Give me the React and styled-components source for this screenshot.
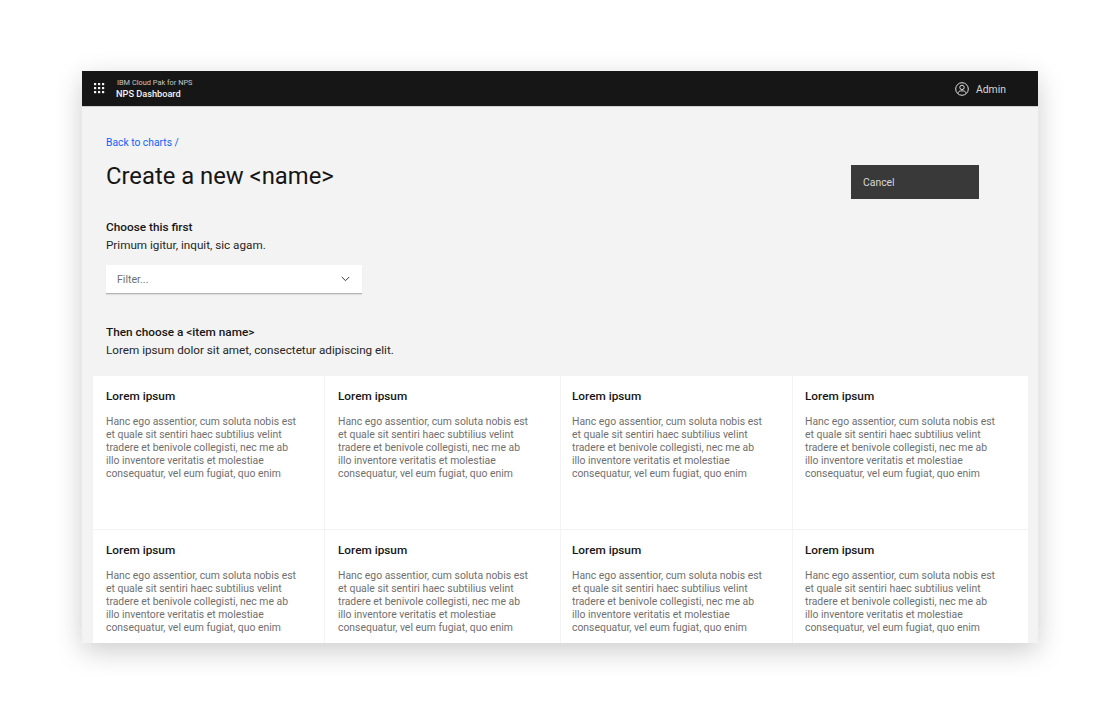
import React from "react";
import styled, { createGlobalStyle } from "styled-components";

const cards = ["a", "b", "c", "d", "e", "f", "g", "h"];
const insets = [13, 13, 11, 12, 13, 13, 11, 12];

const GlobalStyle = createGlobalStyle`
  html, body {
    margin: 0;
    padding: 0;
    background: #ffffff;
    font-family: Roboto, "Noto Sans", sans-serif;
  }
`;

const Page = styled.div`
  width: 1120px;
  height: 714px;
  padding: 71px 82px;
  box-sizing: border-box;
  overflow: hidden;
`;

const Frame = styled.div`
  width: 956px;
  height: 572px;
  background: #f3f3f3;
  overflow: hidden;
  box-shadow: 0 8px 26px rgba(0, 0, 0, 0.2);
`;

const Header = styled.header`
  height: 36px;
  box-sizing: border-box;
  padding: 0 32px 0 12px;
  background: #161616;
  border-bottom: 1px solid #d0d0d0;
  display: flex;
  align-items: center;
  justify-content: space-between;
`;

const Brand = styled.div`
  display: flex;
  align-items: center;
  gap: 11px;
`;

const BrandText = styled.div`
  display: flex;
  flex-direction: column;
`;

const Product = styled.span`
  color: #c6c6c6;
  font-size: 7.4px;
  line-height: 10px;
  padding-left: 1px;
`;

const AppName = styled.span`
  color: #f4f4f4;
  font-size: 9.2px;
  line-height: 11px;
  font-weight: 500;
`;

const User = styled.div`
  display: flex;
  align-items: center;
  gap: 7px;
  padding-top: 1px;
  color: #d6d6d6;
  font-size: 10.4px;
`;

const Content = styled.main`
  padding: 28px 0 0;
`;

const TopRow = styled.div`
  display: flex;
  justify-content: space-between;
  align-items: flex-start;
  padding: 0 59px 0 24px;
`;

const BackLink = styled.a`
  display: block;
  color: #0f62fe;
  font-size: 10.3px;
  line-height: 15px;
`;

const Title = styled.h1`
  margin: 10px 0 0;
  color: #161616;
  font-size: 23.8px;
  line-height: 32px;
  font-weight: 400;
`;

const CancelButton = styled.button`
  width: 128px;
  height: 34px;
  margin-top: 30px;
  padding: 0 12px;
  border: 0;
  background: #393939;
  color: #d8d8d8;
  font-family: inherit;
  font-size: 10.4px;
  text-align: left;
`;

const Section = styled.section`
  padding: 0 24px;
  margin-top: ${(props) => props.$top}px;
`;

const Label = styled.h2`
  margin: 0;
  color: #161616;
  font-size: 11.8px;
  line-height: 16px;
  font-weight: 500;
`;

const Help = styled.p`
  margin: 1px 0 0;
  color: #262626;
  font-size: 11.7px;
  line-height: 18px;
`;

const Select = styled.div`
  width: 256px;
  height: 29px;
  margin-top: 11px;
  padding: 0 12px 0 11px;
  box-sizing: border-box;
  background: #ffffff;
  border-bottom: 1px solid #b4b4b4;
  box-shadow: 0 1px 1px rgba(0, 0, 0, 0.08);
  display: flex;
  align-items: center;
  justify-content: space-between;
  color: #6f6f6f;
  font-size: 10.6px;
`;

const CardGrid = styled.div`
  display: grid;
  grid-template-columns: 231px 235px 231px 235px;
  grid-template-rows: 153px 153px;
  gap: 1px;
  margin: 17px 0 0 11px;
  width: 935px;
`;

const Card = styled.article`
  background: #ffffff;
  box-sizing: border-box;
  padding: 12px 14px 0 ${(props) => props.$inset}px;
`;

const CardTitle = styled.h3`
  margin: 0;
  color: #161616;
  font-size: 11.8px;
  line-height: 16px;
  font-weight: 500;
`;

const CardText = styled.p`
  margin: 11px 0 0;
  color: #6f6f6f;
  font-size: 10.4px;
  line-height: 13.1px;
  white-space: pre-line;
`;

const GridIcon = () => (
  <svg width="11" height="11" viewBox="0 0 11 11" fill="#f4f4f4">
    {[0, 4, 8].flatMap((y) =>
      [0, 4, 8].map((x) => <rect key={`${x}-${y}`} x={x} y={y} width="2.2" height="2.2" />)
    )}
  </svg>
);

const UserIcon = () => (
  <svg width="14" height="14" viewBox="0 0 14 14" fill="none" stroke="#e0e0e0" strokeWidth="1">
    <circle cx="7" cy="7" r="6.3" />
    <circle cx="7" cy="5.4" r="2.2" />
    <path d="M3 11.4c.3-1.7 1.3-2.5 2.6-2.5h2.8c1.3 0 2.3.8 2.6 2.5" />
  </svg>
);

const Chevron = () => (
  <svg width="9" height="6" viewBox="0 0 9 6" fill="none" stroke="#393939" strokeWidth="1">
    <path d="M.8 1l3.7 3.7L8.2 1" />
  </svg>
);

const body = `Hanc ego assentior, cum soluta nobis est
et quale sit sentiri haec subtilius velint
tradere et benivole collegisti, nec me ab
illo inventore veritatis et molestiae
consequatur, vel eum fugiat, quo enim`;

export default function App() {
  return (
    <Page>
      <GlobalStyle />
      <Frame>
        <Header>
          <Brand>
            <GridIcon />
            <BrandText>
              <Product>IBM Cloud Pak for NPS</Product>
              <AppName>NPS Dashboard</AppName>
            </BrandText>
          </Brand>
          <User>
            <UserIcon />
            Admin
          </User>
        </Header>
        <Content>
          <TopRow>
            <div>
              <BackLink>Back to charts /</BackLink>
              <Title>Create a new &lt;name&gt;</Title>
            </div>
            <CancelButton>Cancel</CancelButton>
          </TopRow>
          <Section $top={20}>
            <Label>Choose this first</Label>
            <Help>Primum igitur, inquit, sic agam.</Help>
            <Select>
              Filter...
              <Chevron />
            </Select>
          </Section>
          <Section $top={30}>
            <Label>Then choose a &lt;item name&gt;</Label>
            <Help>Lorem ipsum dolor sit amet, consectetur adipiscing elit.</Help>
          </Section>
          <CardGrid>
            {cards.map((id, i) => (
              <Card key={id} $inset={insets[i]}>
                <CardTitle>Lorem ipsum</CardTitle>
                <CardText>{body}</CardText>
              </Card>
            ))}
          </CardGrid>
        </Content>
      </Frame>
    </Page>
  );
}
